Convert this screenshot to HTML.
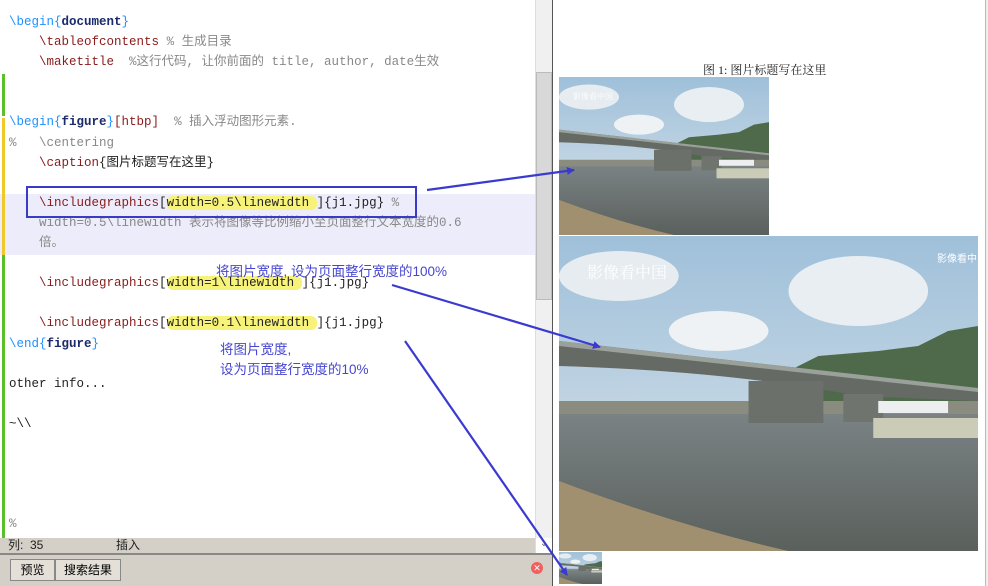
<!DOCTYPE html>
<html><head><meta charset="utf-8"><style>
body{margin:0;width:988px;height:586px;overflow:hidden;background:#fff;position:relative;font-family:"Liberation Sans","Noto Sans CJK SC",sans-serif}
.ab{position:absolute}
.code{position:absolute;left:9px;font-family:"Liberation Mono","Noto Sans CJK SC",monospace;font-size:12.5px;line-height:20.1px;white-space:pre;color:#222}
.kw{color:#1e90ff}.b{color:#1a2a6a;font-weight:bold}.cm{color:#888}.cmd{color:#8b1a1a}
.hl{background:#f7f37a;border-radius:6px}
.note{position:absolute;color:#4646d0;font-size:13.5px;font-family:"Liberation Sans","Noto Sans CJK SC",sans-serif}
</style></head><body>
<div class="ab" style="left:0;top:0;width:535px;height:538px;background:#fff"></div>
<div class="ab" style="left:0;top:194px;width:535px;height:61px;background:#ececfa"></div>
<div class="ab" style="left:2px;top:74px;width:3px;height:42px;background:#5bc02c"></div>
<div class="ab" style="left:2px;top:118px;width:3px;height:137px;background:#f0c828"></div>
<div class="ab" style="left:2px;top:255px;width:3px;height:283px;background:#5bc02c"></div>
<div class="code" style="top:12px"><span class="kw">\begin{</span><span class="b">document</span><span class="kw">}</span>
    <span class="cmd">\tableofcontents</span> <span class="cm">% 生成目录</span>
    <span class="cmd">\maketitle</span>  <span class="cm">%这行代码, 让你前面的 title, author, date生效</span>


<span class="kw">\begin{</span><span class="b">figure</span><span class="kw">}</span><span class="cmd">[htbp]</span>  <span class="cm">% 插入浮动图形元素.</span>
<span class="cm">%   \centering</span>
    <span class="cmd">\caption</span>{图片标题写在这里}

    <span class="cmd">\includegraphics</span>[<span class="hl">width=0.5\linewidth </span>]{j1.jpg} <span class="cm">%</span>
    <span class="cm">width=0.5\linewidth 表示将图像等比例缩小至页面整行文本宽度的0.6</span>
    <span class="cm">倍。</span>

    <span class="cmd">\includegraphics</span>[<span class="hl">width=1\linewidth </span>]{j1.jpg}

    <span class="cmd">\includegraphics</span>[<span class="hl">width=0.1\linewidth </span>]{j1.jpg}
<span class="kw">\end{</span><span class="b">figure</span><span class="kw">}</span>

other info...

~\\




<span class="cm">%</span></div>
<div class="ab" style="left:26px;top:186px;width:387px;height:28px;border:2px solid #3a3ac8"></div>
<div class="note" style="left:216px;top:260px">将图片宽度, 设为页面整行宽度的100%</div>
<div class="note" style="left:220px;top:340px;line-height:20px">将图片宽度,<br>设为页面整行宽度的10%</div>
<div class="ab" style="left:535px;top:0;width:17px;height:553px;background:#f0f0f0;border-left:1px solid #ddd"></div>
<div class="ab" style="left:536px;top:72px;width:16px;height:228px;background:#d8d8d8;border:1px solid #bbb;box-sizing:border-box"></div>
<div class="ab" style="left:536px;top:538px;width:16px;height:15px;background:#fff;font-size:10px;color:#666;text-align:center">⌄</div>
<div class="ab" style="left:0;top:538px;width:535px;height:15px;background:#d4d0c8;font-size:12px;line-height:15px;color:#222"><span style="position:absolute;left:8px">列:&nbsp; 35</span><span style="position:absolute;left:116px">插入</span></div>
<div class="ab" style="left:0;top:553px;width:552px;height:2px;background:#888"></div>
<div class="ab" style="left:0;top:555px;width:552px;height:31px;background:#d4d0c8"></div>
<div class="ab" style="left:10px;top:559px;width:43px;height:20px;border:1px solid #888;background:#e4e0d8;font-size:12px;line-height:20px;text-align:center">预览</div>
<div class="ab" style="left:55px;top:559px;width:64px;height:20px;border:1px solid #888;background:#e4e0d8;font-size:12px;line-height:20px;text-align:center">搜索结果</div>
<div class="ab" style="left:531px;top:562px;width:12px;height:12px;border-radius:50%;background:#f06060;color:#fff;font-size:9px;line-height:12px;text-align:center">✕</div>
<div class="ab" style="left:552px;top:0;width:1px;height:586px;background:#555"></div>
<div class="ab" style="left:985px;top:0;width:1px;height:586px;background:#bbb"></div>
<div class="ab" style="left:986px;top:0;width:2px;height:586px;background:#eee"></div>
<div class="ab" style="left:703px;top:61px;font-family:'Liberation Serif','Noto Serif CJK SC',serif;font-size:12px;color:#222">图 1: 图片标题写在这里</div>
<svg width="0" height="0" style="position:absolute"><defs>
<linearGradient id="sky" x1="0" y1="0" x2="0" y2="1"><stop offset="0" stop-color="#9fc0da"/><stop offset="1" stop-color="#dde5ea"/></linearGradient>
<linearGradient id="wat" x1="0" y1="0" x2="0" y2="1"><stop offset="0" stop-color="#7a8284"/><stop offset="1" stop-color="#5a605c"/></linearGradient>
<symbol id="scene" viewBox="0 0 420 315" preserveAspectRatio="none">
<rect width="420" height="315" fill="url(#sky)"/>
<ellipse cx="60" cy="40" rx="60" ry="25" fill="#e6ecf0"/><ellipse cx="160" cy="95" rx="50" ry="20" fill="#eef2f4"/><ellipse cx="300" cy="55" rx="70" ry="35" fill="#e8eef2"/>
<path d="M200 150 L260 120 L320 115 L360 110 L390 95 L420 90 L420 175 L200 175Z" fill="#4f6a4a"/>
<rect x="0" y="165" width="420" height="15" fill="#8a8c80"/>
<rect x="0" y="178" width="420" height="137" fill="url(#wat)"/>
<path d="M0 105 L420 152 L420 165 L300 160 Q170 135 0 130Z" fill="#666a64"/>
<path d="M0 105 L420 152 L420 156 L0 110Z" fill="#9aa09a"/>
<rect x="190" y="145" width="75" height="42" fill="#6c706a"/><rect x="285" y="158" width="40" height="28" fill="#70746e"/>
<rect x="320" y="165" width="70" height="12" fill="#eceef0"/><rect x="315" y="182" width="105" height="20" fill="#caccb8"/>
<path d="M0 245 Q120 290 230 315 L0 315Z" fill="#a09070"/>
</symbol></defs></svg>
<svg class="ab" style="left:559px;top:77px" width="210" height="158"><use href="#scene" width="210" height="158"/><text x="14" y="22" fill="#fff" font-size="8" font-family="Noto Serif CJK SC,serif">影像看中国</text></svg>
<svg class="ab" style="left:559px;top:236px" width="419" height="315"><use href="#scene" width="419" height="315"/><text x="28" y="42" fill="#fff" font-size="16" font-family="Noto Serif CJK SC,serif">影像看中国</text><text x="378" y="26" fill="#fff" font-size="10" font-family="Noto Sans CJK SC,sans-serif">影像看中</text></svg>
<svg class="ab" style="left:559px;top:552px" width="43" height="32"><use href="#scene" width="43" height="32"/></svg>
<svg class="ab" style="left:0;top:0" width="988" height="586">
<defs><marker id="ar" markerWidth="8" markerHeight="8" refX="7" refY="4" orient="auto" markerUnits="userSpaceOnUse" viewBox="0 0 8 8"><path d="M0 0 L8 4 L0 8Z" fill="#3a3ad0"/></marker></defs>
<g stroke="#3a3ad0" stroke-width="2.2" fill="none">
<line x1="427" y1="190" x2="574" y2="170" marker-end="url(#ar)"/>
<line x1="392" y1="285" x2="600" y2="347" marker-end="url(#ar)"/>
<line x1="405" y1="341" x2="567" y2="575" marker-end="url(#ar)"/>
</g></svg>
</body></html>
